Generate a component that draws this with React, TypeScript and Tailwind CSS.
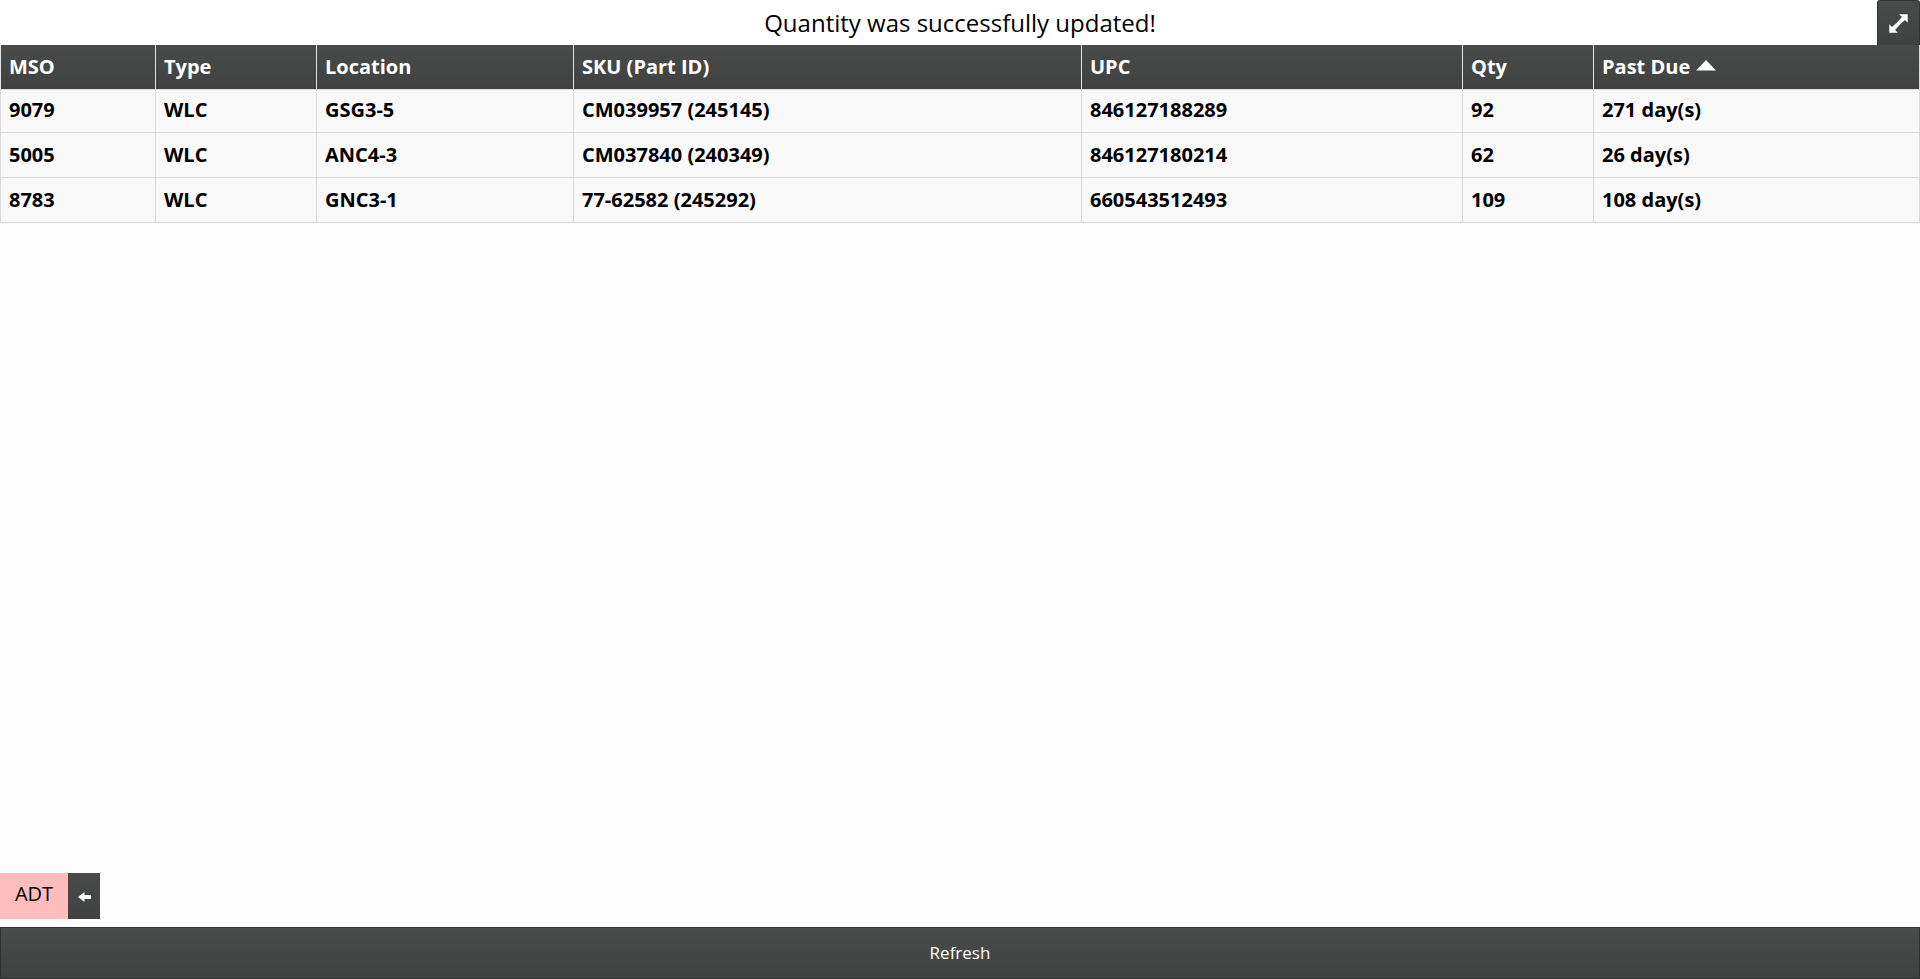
const columns = ["MSO", "Type", "Location", "SKU (Part ID)", "UPC", "Qty", "Past Due"];

const rows = [
  ["9079", "WLC", "GSG3-5", "CM039957 (245145)", "846127188289", "92", "271 day(s)"],
  ["5005", "WLC", "ANC4-3", "CM037840 (240349)", "846127180214", "62", "26 day(s)"],
  ["8783", "WLC", "GNC3-1", "77-62582 (245292)", "660543512493", "109", "108 day(s)"],
];

const rowGrid =
  "grid grid-cols-[155px_161px_257px_508px_381px_131px_326px] border-r border-[#d9d9d9]";

export default function App() {
  return (
    <div className="flex h-[979px] w-full flex-col overflow-hidden bg-[#fcfcfc] font-['Open_Sans','Noto_Sans',sans-serif] text-black">
      <header className="relative flex h-[45px] shrink-0 items-center justify-center bg-white">
        <h1 className="text-[24px] leading-[46px] font-normal">Quantity was successfully updated!</h1>
        <button
          aria-label="Expand"
          className="absolute top-0 right-0 flex h-[45px] w-[43px] items-center justify-center rounded-t-[3px] border border-b-0 border-[#333434] bg-linear-to-b from-[#494b4a] to-[#404241]"
        >
          <svg className="h-[19px] w-[19px]" viewBox="0 0 19 19" fill="#fff">
            <path d="M10.2 0.3h8.5v8.5l-2.7-2.7-3.9 3.5-2.7-2.7 3.5-3.9zM8.8 18.7H.3v-8.5l2.7 2.7 3.9-3.5 2.7 2.7-3.5 3.9z" />
            <path d="M7 9.4 9.4 7l2.6 2.6-2.4 2.4z" />
          </svg>
        </button>
      </header>

      <div role="table" className="shrink-0 text-[20px]">
        <div role="row" className={`${rowGrid} h-[44px] bg-linear-to-b from-[#494b4a] to-[#404241] font-bold text-white`}>
          {columns.map((label, i) => (
            <div key={label} role="columnheader" className="flex items-center border-l border-[#e4e4e4] pl-2">
              <span className="leading-[44px]">{label}</span>
              {i === columns.length - 1 && (
                <svg className="mb-[3px] ml-[6px] h-[11px] w-5" viewBox="0 0 20 11" fill="#fff">
                  <path d="M0 10.5 10 0l10 10.5z" />
                </svg>
              )}
            </div>
          ))}
        </div>
        <div className="h-px bg-[#dcdcdc]" />
        {rows.map((row, i) => (
          <div
            key={row[0]}
            role="row"
            className={`${rowGrid} ${i === 0 ? "h-[43px]" : "h-[45px]"} border-b bg-[#f9f9f9] font-bold`}
          >
            {row.map((value, j) => (
              <div
                key={j}
                role="cell"
                className={`border-l border-[#d9d9d9] pl-2 ${i === 0 ? "leading-[40px]" : "leading-[44px]"}`}
              >
                {value}
              </div>
            ))}
          </div>
        ))}
      </div>

      <div className="mt-auto mb-2 flex h-[46px] shrink-0">
        <div className="w-[68px] bg-[#ffbcbc] text-center text-[20px] leading-[42px] font-normal">ADT</div>
        <button
          aria-label="Back"
          className="flex w-8 items-center justify-center bg-linear-to-b from-[#494b4a] to-[#404241] pt-[2px]"
        >
          <svg className="h-[10px] w-[13px]" viewBox="0 0 13 10" fill="#fff">
            <path d="M0 5 6.5 0v3H13v4H6.5v3z" />
          </svg>
        </button>
      </div>

      <button className="h-[52px] shrink-0 border border-[#303131] bg-linear-to-b from-[#494b4a] to-[#404241] text-[17px] leading-[50px] text-white">
        Refresh
      </button>
    </div>
  );
}
